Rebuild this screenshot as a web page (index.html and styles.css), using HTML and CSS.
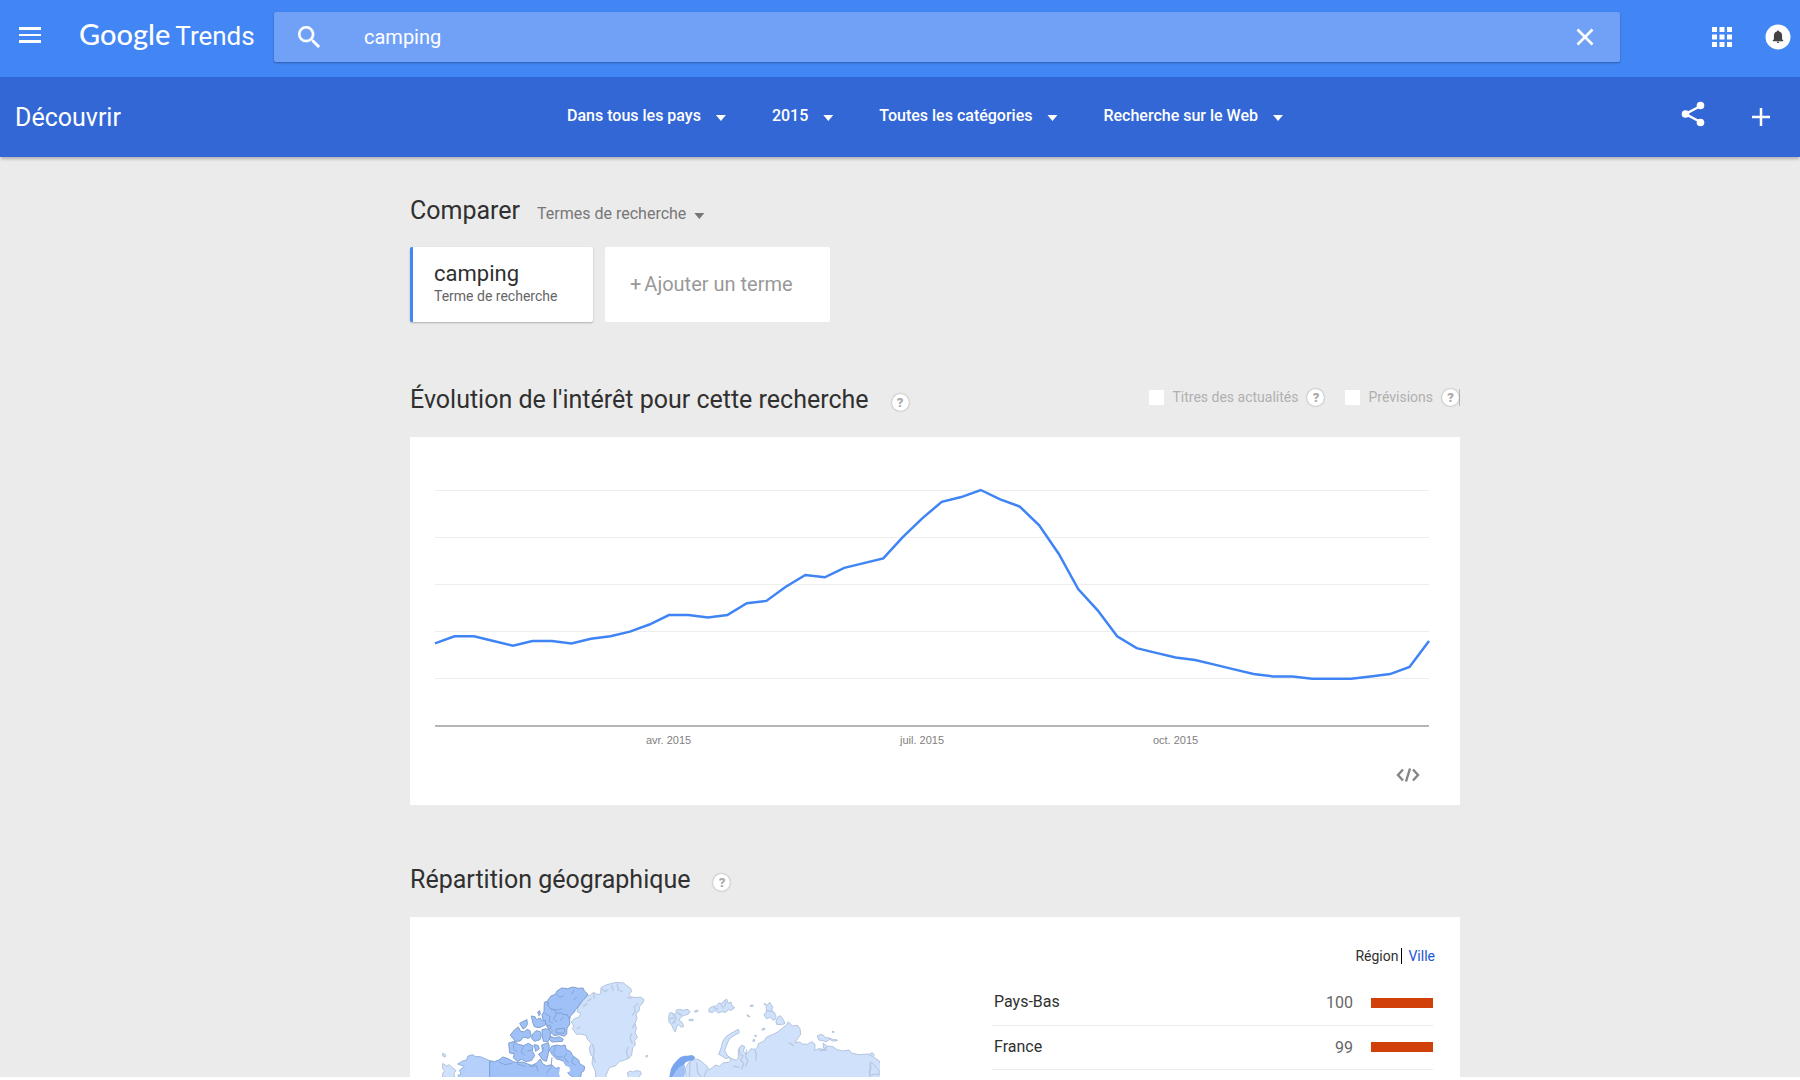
FILE: index.html
```html
<!DOCTYPE html>
<html lang="fr">
<head>
<meta charset="utf-8">
<meta name="viewport" content="width=device-width, initial-scale=1">
<title>Google Trends - camping</title>
<link rel="stylesheet" href="styles.css">
</head>
<body>
<div class="page">
  <header class="topbar">
    <button class="icon-button menu-button" aria-label="Menu">
      <svg width="22" height="16" viewBox="0 0 22 16"><path d="M0 0h22v3H0zM0 7h22v2H0zM0 13h22v3H0z" fill="#fff"/></svg>
    </button>
    <a class="logo" href="#"><span class="logo-google">Google</span><span class="logo-trends">Trends</span></a>
    <form class="search">
      <button class="icon-button" type="button" aria-label="Rechercher">
        <svg width="22" height="22" viewBox="3 3 17.5 17.5"><path d="M15.5 14h-.79l-.28-.27A6.471 6.471 0 0 0 16 9.500 6.500 6.500 0 1 0 9.500 16c1.610 0 3.090-.59 4.230-1.570l.27.28v.79l5 4.990L20.490 19l-4.990-5zm-6 0C7.010 14 5 11.990 5 9.500S7.010 5 9.500 5 14 7.010 14 9.500 11.990 14 9.500 14z" fill="#fff" stroke="#fff" stroke-width=".2"/></svg>
      </button>
      <input class="search-input" type="text" value="camping" aria-label="Terme de recherche">
      <button class="icon-button" type="button" aria-label="Effacer">
        <svg width="18" height="18" viewBox="0 0 18 18"><path d="M1.500 1.500l15 15M16.500 1.500l-15 15" stroke="#fff" stroke-width="2.600"/></svg>
      </button>
    </form>
    <div class="account">
      <button class="icon-button" aria-label="Applications">
        <svg width="20" height="20" viewBox="0 0 20 20"><path d="M0 0h5v5H0zM7.500 0h5v5h-5zM15 0h5v5h-5zM0 7.500h5v5H0zM7.500 7.500h5v5h-5zM15 7.500h5v5h-5zM0 15h5v5H0zM7.500 15h5v5h-5zM15 15h5v5h-5z" fill="#fff"/></svg>
      </button>
      <button class="icon-button" aria-label="Notifications">
        <svg width="26" height="26" viewBox="0 0 26 26"><circle cx="13" cy="13" r="12.500" fill="#fff"/><path d="M13 6.500c-.7 0-1.100.5-1.100 1.100-2 .6-3 2.100-3 4.100v3.600L7.700 16.400v.8h10.600v-.8l-1.200-1.100v-3.600c0-2-1-3.500-3-4.100 0-.6-.4-1.100-1.100-1.100zM11.700 17.800a1.300 1.300 0 0 0 2.600 0z" fill="#424242"/></svg>
      </button>
    </div>
  </header>

  <nav class="subbar">
    <h1 class="subbar-title">Découvrir</h1>
    <div class="filters">
      <button class="filter">Dans tous les pays<span class="caret"></span></button>
      <button class="filter">2015<span class="caret"></span></button>
      <button class="filter">Toutes les catégories<span class="caret"></span></button>
      <button class="filter">Recherche sur le Web<span class="caret"></span></button>
    </div>
    <div class="actions">
      <button class="icon-button share-button" aria-label="Partager">
        <svg width="24" height="26" viewBox="0 0 24 26"><path d="M19.500 5L4.500 13l15 8" fill="none" stroke="#fff" stroke-width="2.500"/><circle cx="19.500" cy="4.500" r="3.800" fill="#fff"/><circle cx="4.500" cy="13" r="3.800" fill="#fff"/><circle cx="19.500" cy="21.500" r="3.800" fill="#fff"/></svg>
      </button>
      <button class="icon-button" aria-label="Ajouter">
        <svg width="18" height="18" viewBox="0 0 18 18"><path d="M9 0v18M0 9h18" stroke="#fff" stroke-width="2.500"/></svg>
      </button>
    </div>
  </nav>

  <main class="content">
    <section class="compare">
      <div class="compare-head">
        <h2 class="heading">Comparer</h2>
        <button class="type-picker">Termes de recherche<span class="caret"></span></button>
      </div>
      <div class="terms">
        <div class="term">
          <span class="term-name">camping</span>
          <span class="term-type">Terme de recherche</span>
        </div>
        <button class="add-term"><span class="add-sign">+</span>Ajouter un terme</button>
      </div>
    </section>

    <section class="interest">
      <div class="section-head">
        <h2 class="heading">Évolution de l'intérêt pour cette recherche</h2>
        <button class="help" aria-label="Aide">?</button>
        <div class="options">
          <input class="tick" type="checkbox" id="news"><label for="news">Titres des actualités</label>
          <button class="help" aria-label="Aide sur les titres">?</button>
          <input class="tick tick-next" type="checkbox" id="forecast"><label for="forecast">Prévisions</label>
          <button class="help" aria-label="Aide sur les prévisions">?</button>
        </div>
      </div>
      <div class="panel chart-panel">
        <svg class="chart" viewBox="0 0 51 100" preserveAspectRatio="none" role="img" aria-label="Intérêt pour camping en 2015">
          <path class="grid-line" d="M0 0H51M0 20H51M0 40H51M0 60H51M0 80H51"/>
          <path class="axis-line" d="M0 100H51"/>
          <polyline class="trend-line" stroke-width="2.5" points="0,65 1,62 2,62 3,64 4,66 5,64 6,64 7,65 8,63 9,62 10,60 11,57 12,53 13,53 14,54 15,53 16,48 17,47 18,41 19,36 20,37 21,33 22,31 23,29 24,20 25,12 26,5 27,3 28,0 29,4 30,7 31,15 32,27 33,42 34,51 35,62 36,67 37,69 38,71 39,72 40,74 41,76 42,78 43,79 44,79 45,80 46,80 47,80 48,79 49,78 50,75 51,64"/>
        </svg>
        <div class="months"><span></span><span>avr. 2015</span><span>juil. 2015</span><span>oct. 2015</span></div>
        <div class="panel-foot">
          <button class="icon-button" aria-label="Intégrer">
            <svg width="24" height="14" viewBox="0 0 24 14"><path d="M7 1.500L2 7l5 5.500M17 1.500L22 7l-5 5.500M14 .5L10 13.500" fill="none" stroke="#858585" stroke-width="2.400"/></svg>
          </button>
        </div>
      </div>
    </section>

    <section class="regions">
      <div class="section-head">
        <h2 class="heading">Répartition géographique</h2>
        <button class="help" aria-label="Aide">?</button>
      </div>
      <div class="panel region-panel">
        <svg class="map" viewBox="0 0 1350 420" role="img" aria-label="Carte du monde">
          <g class="land light">
            <path d="M38 310l12 8 8-4 8 8 12 10-6 8 2 12-8 60H38V340l6-8-6-6zM38 280l5 2 5 4-3 5-7-3z"/>
            <path d="M459 113l8-6 14-1 9-9 14 7 8-3 1-18 12-7 20-6 18-3 18 2 9 8 12 8 3 10-9 7 6 8 16 3 14-2 10 8-4 10-9 10-2 14-9 8 3 15-6 14 4 14-4 14 7 14-8 10 2 13-8 8-3 22-7 9-14 6-16 5-12 13-17 4-6 12-5 12V420H497V345L495 330 486 312 488 290 481 282 478 265 484 250 472 238 468 226 452 222 440 223 428 207 431 196 423 186 432 177 448 171 452 160 441 155 445 140 455 130z"/>
            <path d="M592 338l9-5 7 3 11-4 12 2 3 8-8 10-10 20-18-6zM647 288l4-3 2 3-3 4z"/>
            <path d="M718 160l8-3 4 6 8-2 1-11 10-2 12 3 10-3 9 6-5 8-15 5-9 6-3 8 8 6 5 12-7 3-9-9-6 10-3 13-7-11-4-10-8-8-1-14zM793 154l8-4 4 3-9 4zM776 180l8-3 7 3-9 3z"/>
            <path d="M838 145l9-5 13-3 7-8 9 2 4-7 10-7 5 13 8-4 2 9 9 8-10 8-9-2-8 8-13-2-9 4-9-8-9 7-11-3z"/>
            <path d="M960 136l8-1 2 3-8 2zM951 164l6 3 3 3-7-1zM1002 131l6 1 1 4-6-2zM1009 139l10-12 9 14-3 10 7 5 6 12-1 9-8 4-8-9-12 4-7-12 7-8zM1043 172l8-5 8 10 6 13-10 4-15-1-2-9z"/>
            <path d="M866 283l8-21 4-18 12-16 20-12 15-8 3 10-17 9-14 11-8 20-5 13 7 14 8 7-12 4-11-8zM970 238l5 2-3 6-4-3zM974 225l6 2-3 4zM995 208l8-4 2 4-8 3z"/>
            <path d="M1162 228l10-5 8 3 6 7 12 1 12 5 10 0 2 3-15 1-7-5-12 7-10-3-12-2zM1179 250l9 6 6 8-13 1zM1318 283l8-5 7 6-5 7-8-2zM1208 213l5 3-5 2z"/>
            <path d="M768 350l-2-24 8-16 18-14 17 4 15 13 9 7 2 10 13-7 7-8 14 4 10-10 17-2 7-7-8-10 12 7 12 4 6-7 0-24 9-14 10 3-4 16 9 7 8-7 6-9 12 3 8-8 2-10 17-8 8-12 17-7 16-8 12-10 14-10 6-11 12 13 16-2 7 10 2 17-7 10-10 15 14-2 8 6 15 1 14-8 9 8-1 18 13-5 19 3 6-11 17 2 12 9 17 4 19-3 7 9 22 5 28-2 14 7 20 14 5 12v50H760z"/>
            <path d="M1321 306l10 7 8 10 8 8v14l-12-3-14 4-5-11 7-7z"/>
          </g>
          <g class="coast">
            <path d="M927 263l3 20 9 4-7 14 9 9-6 18M950 268l-3 23 7 10-8 20M973 266l6 16-2 20M910 318l18 4M780 300l-4 120M800 308l3 30 16 18M831 329l-8 18 6 14M1076 248l16 9M1168 272l22-2M1321 310l-3 60M490 98l4 18M513 83l12 12 10-6M544 75l6 18M561 70l4 20 13 5M604 116l-12-4M625 130l-12 10 3 14-10 12M615 190l-8 14M606 220l-6 15 7 16M594 260l-5 16 6 20M487 252l6 18-3 20 6 18M440 206l12-5M459 140l13-9M472 124l12-8M718 177l14-4M725 190l12-4M1010 152l16 3M728 160l10 14-8 16M742 158l14 8M850 142l14 6M872 134l10 12M888 124l-4 16"/>
          </g>
          <g class="land alaska">
            <path d="M83 312l15-9 12-3 3-11 14-5 10 6 14 0 11 5 17 7v118H76l9-75 9-3-6-11 15-12z"/>
          </g>
          <g class="land mid">
            <path d="M179 302l14 3 14-5 11-9 17 5 14 9 12 3 18-2 14 6 12 4 14-6 12-13 6 13 12 8 16-4 12 11 14-3 7 10-6 16 7 8 5 12v55H179z"/>
            <path d="M353 121l10-13 13-5 5-10 14-9 18 2 15-5 16 4 15-1 4 9 10 9-3 7-8 9-8 8-8 12-9 11-6 10-10 9-2 10-11 13-15-1-4-11-16-1-12 4z"/>
            <path d="M343 127l7-3 5 14 7 9 12 4 5 10 12-3 11 6 9 0 8 14 0 14-8 13-1 17-7 7-15-5-15 3-10-9 4-8-14-8-6-12-8-11-3-14 6-11z"/>
            <path d="M304 168l11 2 4 9 11-5 8 9 8-2 1 13-9 5-11 4-14-3-4-10zM323 156l6-4 2 10-4 5zM269 190l9-5 13-6 1 14-5 9-8 5-5-9zM241 225l12-15 12-9 6 12 12 3 8-8 9 4 4 17-9 6-15-4-9 12-15 1z"/>
            <path d="M309 221l9-9 13 3 3 12-4 12-17 5-8-9zM336 209l13-3 12 5 0 20-7 14-14-1-3-14zM361 229l13 5 14-4 12 8-3 6-31 2-8-8zM351 198l6-3 7 5-6 9zM379 207l24-2 2 8-5 7-22-2z"/>
            <path d="M236 249l17-5 12 9 16 4 14-7 14 8-2 16 7 12-9 15-16 4-14-7-13 7-12-12 3-12-14-2zM312 254l12 2 4 10-11 8zM326 282l12-7-3-20 20-7 3 12-3 21-6 23-12-5z"/>
            <path d="M365 259l16-4 12 3 12-3 4 13 13 7 6 12 18 13 3 11 15 9-2 12-8 6-2 13-17 3-16-9-10-13-4-19-7-11-20-6-12-13-8-13z"/>
          </g>
          <g class="coast strong">
            <path d="M355 139l8 8 22 3 12-4M381 103l8 9 12-5M432 90l-6 12M441 112l-10 6M344 160l17 10-4 14 12 5M379 162l-9 15 12 9M402 171l-12 10M253 246l-3 20 12 10M281 257l-8 20 11 9M309 269l-17 4M341 262l-5 14M378 258l-8 20 10 12 18 1M410 280l-8 12 13 17M430 291l-5 16 12 9M207 306l18 8 22-4M262 312l24 7M298 320l22-3 4 17M366 292l-3 30-14 17"/>
          </g>
          <path d="M388 305l12 0 7 12 11 5 3 11-11 5-7 13-8 19-8-30 3-15-6-11z" fill="#fff"/>
          <path class="norway" d="M718 350l5-24 8-14 13-14 8-7 11-4 10 0 13-2 9 6-4 10-12 1-12 5-9 12-7 18-6 13-18 66h-9z"/>
          <path class="sweden" d="M728 420l-4-65 12-20 12-14 16-8 2 20-3 17-6 73z"/>
        </svg>
        <div class="ranking">
          <div class="tabs"><span class="tab-current">Région</span><a class="tab-link" href="#">Ville</a></div>
          <table class="rank-table">
            <tr><th scope="row">Pays-Bas</th><td class="score">100</td><td class="bar-cell"><div class="bar" style="width:100%"></div></td></tr>
            <tr><th scope="row">France</th><td class="score">99</td><td class="bar-cell"><div class="bar" style="width:99%"></div></td></tr>
          </table>
        </div>
      </div>
    </section>
  </main>
</div>
</body>
</html>
```
FILE: styles.css
```css
* {
  box-sizing: border-box;
}

body {
  margin: 0;
  background: #fff;
  color: #303030;
  font-family: Roboto, "Liberation Sans", sans-serif;
  overflow: hidden;
}

/* The app fills the window down to a thin white edge. */
.page {
  height: calc(100vh - 3px);
  overflow: hidden;
  background: #ebebeb;
}

button {
  padding: 0;
  border: 0;
  background: none;
  font-family: inherit;
  cursor: pointer;
}

h1,
h2 {
  margin: 0;
  font-weight: 400;
}

.icon-button {
  display: flex;
  flex: none;
}

/* Top bar */
.topbar {
  display: flex;
  align-items: center;
  height: 77px;
  padding: 0 9px 3px 19px;
  background: #4285f4;
}

.menu-button {
  margin: 0 38px 4px 0;
}

.logo {
  display: flex;
  align-items: baseline;
  gap: 5px;
  width: 195px;
  padding-bottom: 4px;
  color: #fff;
  text-decoration: none;
  line-height: 36px;
}

.logo-google {
  font-family: Lato, sans-serif;
  font-size: 29px;
  font-weight: 500;
}

.logo-trends {
  font-size: 26px;
}

.search {
  display: flex;
  flex: 1;
  align-items: center;
  height: 50px;
  padding: 0 26px 0 24px;
  border-radius: 2px;
  background: #71a1f7;
  box-shadow: 0 1px 2px rgba(0, 0, 0, 0.3);
}

.search-input {
  flex: 1;
  min-width: 0;
  margin-left: 44px;
  padding: 0;
  border: 0;
  outline: 0;
  background: none;
  color: #fff;
  font-family: inherit;
  font-size: 20px;
  line-height: 24px;
}

.account {
  display: flex;
  align-items: center;
  gap: 33px;
  margin-left: 92px;
}

/* Filter bar */
.subbar {
  display: grid;
  grid-template-columns: 1fr auto 1fr;
  align-items: center;
  height: 80px;
  padding: 0 30px 0 15px;
  background: #3367d6;
  box-shadow: 0 3px 3px -1px rgba(0, 0, 0, 0.25);
  color: #fff;
}

.subbar-title {
  padding-top: 2px;
  font-size: 25px;
  line-height: 32px;
}

.filters {
  display: flex;
  gap: 46px;
  padding: 0 0 2px 65px;
}

.filter {
  display: flex;
  align-items: center;
  gap: 15px;
  color: #fff;
  font-size: 16px;
  font-weight: 500;
  line-height: 20px;
}

.caret {
  width: 10px;
  height: 6px;
  margin-top: 4px;
  background: currentColor;
  clip-path: polygon(0 0, 100% 0, 50% 100%);
}

.actions {
  display: flex;
  justify-content: flex-end;
  align-items: center;
  gap: 47px;
}

.share-button {
  margin-bottom: 6px;
}

/* Content column */
.content {
  max-width: 1120px;
  margin: 0 auto;
  padding-left: 70px;
}

.heading {
  font-size: 25px;
  line-height: 32px;
}

.compare {
  padding-top: 38px;
}

.compare-head {
  display: flex;
  align-items: baseline;
  gap: 17px;
}

.type-picker {
  display: flex;
  align-items: center;
  gap: 8px;
  color: #777;
  font-size: 16px;
  line-height: 20px;
}

.terms {
  display: flex;
  gap: 12px;
  height: 75px;
  margin-top: 20px;
}

.term {
  display: flex;
  flex-direction: column;
  width: 183px;
  padding: 14px 0 0 21px;
  border-left: 3px solid #4285f4;
  border-radius: 2px;
  background: #fff;
  box-shadow: 0 1px 2px rgba(0, 0, 0, 0.25);
}

.term-name {
  font-size: 22px;
  line-height: 26px;
}

.term-type {
  color: #666;
  font-size: 14px;
  line-height: 18px;
}

.add-term {
  width: 225px;
  padding: 0 0 2px 25px;
  border-radius: 2px;
  background: #fff;
  color: #999;
  font-size: 20px;
  text-align: left;
}

.add-sign {
  margin-right: 3px;
}

.section-head {
  display: flex;
  align-items: center;
  height: 32px;
}

.section-head > .help {
  margin: 4px 0 0 23px;
}

.interest {
  padding-top: 62px;
}

.help {
  width: 17px;
  height: 17px;
  flex: none;
  border-radius: 50%;
  background: #fff;
  box-shadow: 0 0 2px rgba(0, 0, 0, 0.4);
  color: #aaa;
  font-size: 13px;
  font-weight: 900;
  line-height: 17px;
  text-align: center;
}

.options {
  display: flex;
  align-items: center;
  height: 17px;
  margin: 0 0 6px auto;
  border-right: 1px solid #bbb;
  color: #b0b0b0;
  font-size: 14px;
}

.options .help {
  margin-left: 9px;
}

.tick {
  width: 15px;
  height: 15px;
  margin: 0 8px 0 0;
  appearance: none;
  background: #fff;
}

.tick-next {
  margin-left: 21px;
}

.panel {
  background: #fff;
}

.chart-panel {
  height: 368px;
  margin-top: 21px;
  padding: 53px 31px 0 25px;
}

.chart {
  display: block;
  width: 100%;
  height: 236px;
  overflow: visible;
}

.chart path,
.chart polyline {
  fill: none;
  vector-effect: non-scaling-stroke;
}

.grid-line {
  stroke: #ededed;
  stroke-width: 1px;
  shape-rendering: crispEdges;
}

.axis-line {
  stroke: #b5b5b5;
  stroke-width: 2px;
}

.trend-line {
  stroke: #3f84f4;
}

.months {
  display: grid;
  grid-template-columns: 11% 25% 26% 25% 1fr;
  margin-top: 7px;
  color: #808080;
  font-family: "Liberation Sans", Arial, sans-serif;
  font-size: 11px;
  line-height: 14px;
  text-align: center;
}

.panel-foot {
  display: flex;
  justify-content: flex-end;
  padding: 21px 9px 0 0;
}

.regions {
  padding-top: 59px;
}

.region-panel {
  display: grid;
  grid-template-columns: 450px 1fr;
  column-gap: 112px;
  height: 500px;
  margin-top: 21px;
  padding: 31px 27px 0 20px;
}

.map {
  width: 450px;
  height: 140px;
  margin-top: 12px;
}

.land {
  stroke-width: 3px;
  stroke-linejoin: round;
}

.light {
  fill: #cfe1fb;
  stroke: #b3c4de;
}

.alaska {
  fill: #b5d0fa;
  stroke: #96b3dd;
}

.mid {
  fill: #9fc1f8;
  stroke: #7f9fcd;
}

.coast {
  fill: none;
  stroke: #b9c9e2;
  stroke-width: 4px;
}

.strong {
  stroke: #84a5d6;
  stroke-width: 3px;
}

.norway {
  fill: #78a5ee;
}

.sweden {
  fill: #9fc1f8;
}

.tabs {
  display: flex;
  justify-content: flex-end;
  margin-right: -2px;
  font-size: 14px;
  line-height: 16px;
}

.tab-current {
  padding-right: 3px;
  border-right: 1px solid #000;
}

.tab-link {
  padding-left: 6px;
  color: #1a56d6;
  text-decoration: none;
}

.rank-table {
  width: 100%;
  margin-top: 17px;
  border-collapse: collapse;
  font-size: 16px;
}

.rank-table tr {
  height: 44px;
  border-bottom: 1px solid #ebebeb;
}

.rank-table th {
  padding: 0 0 2px 2px;
  font-weight: 400;
  text-align: left;
}

.rank-table td {
  padding: 0;
}

.score {
  color: #666;
  text-align: right;
}

.bar-cell {
  width: 80px;
}

.bar {
  height: 10px;
  max-width: 62px;
  margin-left: 18px;
  background: #d14009;
}
```
